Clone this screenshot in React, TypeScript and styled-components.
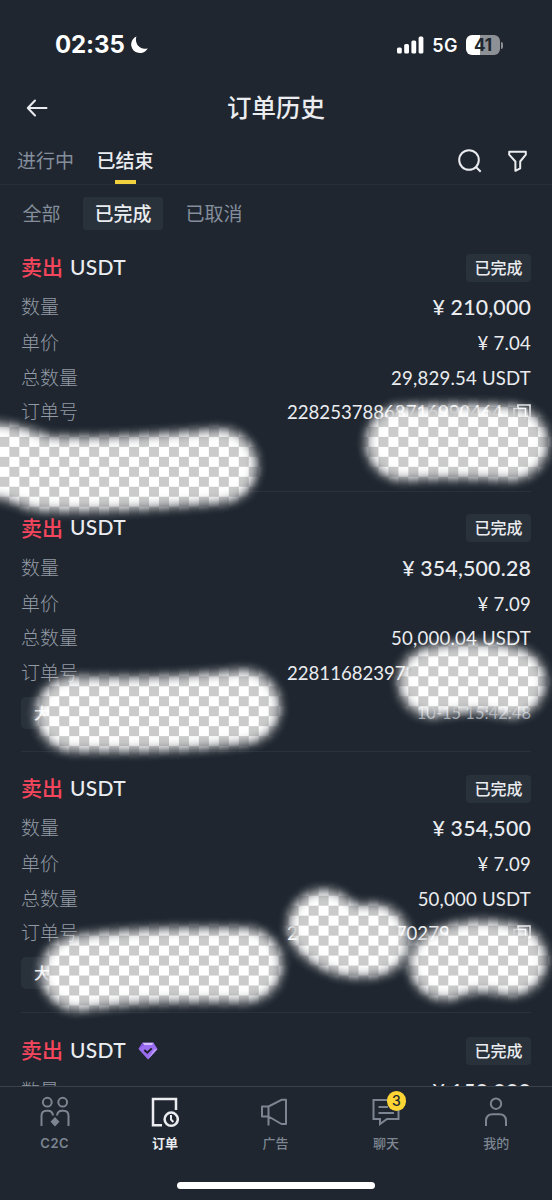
import React from 'react';
import styled, { createGlobalStyle } from 'styled-components';

const Global = createGlobalStyle`
  * { box-sizing: border-box; }
  body { margin: 0; background: #1f262f; }
`;

const latin = `Lato, 'Noto Sans CJK SC', sans-serif`;
const cjk = `'Noto Sans CJK SC', sans-serif`;
const ui = `Inter, 'Noto Sans CJK SC', sans-serif`;

const Screen = styled.div`
  position: relative;
  width: 552px;
  height: 1200px;
  overflow: hidden;
  display: flex;
  flex-direction: column;
  background: #1f262f;
  color: #eaecef;
  font-family: ${cjk};
`;

const StatusBar = styled.div`
  display: flex;
  align-items: center;
  height: 78px;
  padding: 12px 49px 0 55px;
  font-family: ${ui};
  color: #fff;
`;
const Clock = styled.span`
  font-size: 24px;
  font-weight: 700;
  line-height: 28px;
  letter-spacing: -0.1px;
  width: 70px;
  white-space: nowrap;
  margin-right: 5px;
`;
const StatusRight = styled.div`
  margin-left: auto;
  display: flex;
  align-items: center;
`;
const Network = styled.span`
  font-size: 18px;
  font-weight: 600;
  letter-spacing: 0.5px;
  line-height: 24px;
  margin: 1px 8px 0 8px;
`;
const Battery = styled.div`
  width: 34px;
  height: 20px;
  border-radius: 6px;
  background: linear-gradient(90deg, #fff 41%, #8d9196 41%);
  color: #20262e;
  font-size: 17px;
  font-weight: 700;
  line-height: 20px;
  text-align: center;
`;
const BatteryTip = styled.div`
  width: 2px;
  height: 7px;
  margin-left: 1px;
  border-radius: 0 2px 2px 0;
  background: #8d9196;
`;

const TitleBar = styled.header`
  display: grid;
  grid-template-columns: 60px 1fr 60px;
  align-items: center;
  height: 58px;
`;
const Back = styled.div`
  padding-left: 26px;
  padding-top: 1px;
  display: flex;
`;
const Title = styled.h1`
  margin: 0;
  text-align: center;
  font-size: 24.5px;
  font-weight: 500;
  line-height: 36px;
`;

const Tabs = styled.nav`
  display: flex;
  align-items: stretch;
  height: 49px;
  padding: 0 25px 0 17px;
  border-bottom: 1px solid #262e38;
`;
const Tab = styled.div<{ $active?: boolean }>`
  display: flex;
  flex-direction: column;
  align-items: center;
  justify-content: space-between;
  margin-right: 22.5px;
  padding-top: 9px;
  font-size: 19px;
  line-height: 30px;
  font-weight: ${p => (p.$active ? 500 : 400)};
  color: ${p => (p.$active ? '#eaecef' : '#848e9c')};
`;
const TabMark = styled.span`
  width: 21px;
  height: 4px;
  background: #f0d03c;
`;
const Tools = styled.div`
  margin-left: auto;
  display: flex;
  align-items: center;
  gap: 26px;
  padding-top: 2px;
`;

const Filters = styled.div`
  display: flex;
  align-items: center;
  height: 46px;
  padding: 10px 0 0 11px;
`;
const Filter = styled.span<{ $active?: boolean }>`
  height: 33px;
  line-height: 31px;
  padding: 0 11.5px;
  margin-right: 11px;
  border-radius: 3px;
  font-size: 19px;
  font-weight: ${p => (p.$active ? 500 : 400)};
  color: ${p => (p.$active ? '#eaecef' : '#848e9c')};
  background: ${p => (p.$active ? '#29313b' : 'transparent')};
`;

const List = styled.main`
  flex: 1;
  min-height: 0;
  overflow: hidden;
  padding: 0 21px;
`;
const Card = styled.section<{ $last?: boolean }>`
  height: 260.6px;
  padding-top: ${p => (p.$last ? 21 : 19.5)}px;
  border-bottom: 1px solid #29313a;
`;
const CardHead = styled.div`
  display: flex;
  align-items: center;
  height: 34px;
  margin-bottom: 4px;
  font-size: 21px;
  line-height: 30px;
`;
const Side = styled.span`
  color: #f6465d;
  font-weight: 500;
  margin: -3px 7px 0 0;
`;
const Coin = styled.span`
  font-family: ${latin};
  font-weight: 500;
  letter-spacing: 0.3px;
  margin: -2px 12px 0 0;
`;
const Status = styled.span`
  margin-left: auto;
  width: 65px;
  height: 28px;
  border-radius: 4px;
  background: #29313b;
  font-size: 16px;
  font-weight: 500;
  line-height: 26px;
  text-align: center;
`;
const Row = styled.div<{ $first?: boolean }>`
  display: flex;
  align-items: center;
  justify-content: space-between;
  height: ${p => (p.$first ? 37.5 : 34.4)}px;
`;
const Label = styled.span`
  font-size: 19px;
  font-weight: 300;
  line-height: 28px;
  margin-bottom: 2px;
  color: #929aa5;
`;
const Value = styled.span<{ $large?: boolean }>`
  display: flex;
  align-items: center;
  font-family: ${latin};
  font-size: ${p => (p.$large ? 21.3 : 18.6)}px;
  font-weight: ${p => (p.$large ? 500 : 400)};
  letter-spacing: 0.2px;
  white-space: pre;
`;
const OrderNo = styled.span`
  display: flex;
  width: 226px;
  letter-spacing: 0;
`;
const Erased = styled.span`
  width: 98px;
`;
const Foot = styled.div`
  display: flex;
  align-items: center;
  justify-content: space-between;
  height: 46px;
`;
const Party = styled.span`
  height: 32px;
  padding: 0 13px;
  border-radius: 5px;
  background: #29313b;
  font-size: 16px;
  font-weight: 500;
  line-height: 31px;
`;
const Time = styled.span`
  font-family: ${latin};
  font-size: 16.5px;
  color: #929aa5;
`;

const TabBar = styled.footer`
  display: grid;
  grid-template-columns: repeat(5, 1fr);
  height: 114px;
  border-top: 1px solid #39414b;
  background: #1f262f;
`;
const NavItem = styled.div<{ $active?: boolean }>`
  display: flex;
  flex-direction: column;
  align-items: center;
  padding: 9px 1px 0 0;
  font-family: ${ui};
  font-size: 13px;
  font-weight: ${p => (p.$active ? 700 : 500)};
  line-height: 20px;
  color: ${p => (p.$active ? '#eaecef' : '#7c8591')};
`;
const NavLatin = styled.span`
  font-weight: 600;
  letter-spacing: 0.5px;
`;
const IconBox = styled.div`
  position: relative;
  height: 37px;
`;
const Badge = styled.span`
  position: absolute;
  left: 15px;
  top: -5px;
  width: 19px;
  height: 20px;
  border-radius: 10px;
  background: #fcd535;
  color: #20262e;
  font-size: 14px;
  line-height: 20px;
  text-align: center;
`;
const HomeBar = styled.div`
  position: absolute;
  left: 177px;
  bottom: 11px;
  width: 198px;
  height: 7px;
  border-radius: 4px;
  background: #fff;
`;
const Overlay = styled.svg`
  position: absolute;
  left: 0;
  top: 0;
  pointer-events: none;
`;

const line = { fill: 'none', stroke: 'currentColor', strokeWidth: 2 } as const;

const Moon = () => (
  <svg width="18" height="18" viewBox="0 0 18 18">
    <path d="M6.4 0.4A8.7 8.7 0 1 0 17.7 12.2C10.5 14.8 4 8 6.4 0.4Z" fill="#fff" />
  </svg>
);
const Signal = () => (
  <svg width="27" height="18" viewBox="0 0 27 18" fill="#fff">
    <rect x="0" y="11.5" width="4.8" height="6" rx="1.5" />
    <rect x="7.2" y="8" width="4.8" height="9.5" rx="1.5" />
    <rect x="14.4" y="4.5" width="4.8" height="13" rx="1.5" />
    <rect x="21.6" y="0.5" width="4.8" height="17" rx="1.5" />
  </svg>
);
const BackIcon = () => (
  <svg width="22" height="18" viewBox="0 0 22 18" {...line}>
    <path d="M9 1.5L1.8 9L9 16.5M2 9H20.5" strokeLinecap="round" strokeLinejoin="round" />
  </svg>
);
const SearchIcon = () => (
  <svg width="24" height="24" viewBox="0 0 24 24" {...line}>
    <circle cx="11" cy="11" r="9.8" />
    <path d="M18 18L22.7 22.7" />
  </svg>
);
const FunnelIcon = () => (
  <svg width="19" height="22" viewBox="0 0 19 22" {...line}>
    <path d="M1.2 1.7H17.8V4.7L12.2 11.5V18.3L7.4 20.8V11.5L1.2 4.7Z" strokeLinejoin="round" />
  </svg>
);
const CopyIcon = () => (
  <svg width="18" height="16" viewBox="0 0 18 16" fill="none" stroke="currentColor" strokeWidth="1.6">
    <path d="M5 4V1H17V12.5H14M1 4.5H12.5V15H1Z" />
  </svg>
);
const Gem = () => (
  <svg width="20" height="18" viewBox="0 0 20 18">
    <path d="M4.5 0.8H15.5L19.5 7L10 17.5L0.5 7Z" fill="#9a6cf0" />
    <path d="M4.5 0.8H15.5L13.8 3H6.2Z" fill="#d2bdff" />
    <path d="M0.5 7L6.2 3L4.5 0.8Z" fill="#8658e0" />
    <path d="M19.5 7L10 17.5L16 7.5Z" fill="#c09cff" />
    <path d="M6.3 8L9.3 10.7L13.7 6.4" fill="none" stroke="#20202c" strokeWidth="2" />
  </svg>
);
const PeopleIcon = () => (
  <svg width="30" height="32" viewBox="0 0 30 32" {...line}>
    <circle cx="7.3" cy="6.2" r="4.4" />
    <circle cx="22.7" cy="6.2" r="4.4" />
    <path d="M1.5 30V20Q1.5 14.8 6.5 14.8H8Q12.5 14.8 13 19.5M28.5 30V20Q28.5 14.8 23.5 14.8H22Q17.5 14.8 17 19.5" />
    <path d="M15 21L19.5 25.7L15 30.4L10.5 25.7Z" fill="currentColor" stroke="none" />
  </svg>
);
const OrderIcon = () => (
  <svg width="28" height="32" viewBox="0 0 28 32" {...line} strokeWidth="2.5">
    <path d="M11 29.2H2V3H25V14" />
    <circle cx="20.2" cy="23.2" r="6.6" />
    <path d="M20 19V23.5L22.4 26" strokeWidth="2" />
  </svg>
);
const HornIcon = () => (
  <svg width="28" height="32" viewBox="0 0 28 32" {...line}>
    <path d="M1 10.5H7.5V20.5H1ZM7.5 10.5L20.5 3.8H25V28H20.5L7.5 20.5M7.5 20V29.5" strokeLinejoin="round" />
  </svg>
);
const ChatIcon = () => (
  <svg width="28" height="32" viewBox="0 0 28 32" {...line}>
    <path d="M17 4H1.5V23H8V28L15 23H26.5V14M6.5 11H16M6.5 17H22" />
  </svg>
);
const UserIcon = () => (
  <svg width="24" height="32" viewBox="0 0 24 32" {...line}>
    <circle cx="12" cy="7.7" r="5.2" />
    <path d="M2 30V25Q2 18.3 8.7 18.3H15.3Q22 18.3 22 25V30" />
  </svg>
);

interface Order {
  amount: string;
  price?: string;
  total?: string;
  id?: [string, string?];
  party?: string;
  time?: string;
  gem?: boolean;
}

const orders: Order[] = [
  { amount: '210,000', price: '7.04', total: '29,829.54 USDT', id: ['22825378868716990464'] },
  { amount: '354,500.28', price: '7.09', total: '50,000.04 USDT', id: ['228116823973'], party: '大', time: '10-15 15:42:48' },
  { amount: '354,500', price: '7.09', total: '50,000 USDT', id: ['2', '70279'], party: '大' },
  { amount: '150,000', gem: true },
];

const OrderCard = ({ order }: { order: Order }) => (
  <Card $last={order.gem}>
    <CardHead>
      <Side>卖出</Side>
      <Coin>USDT</Coin>
      {order.gem && <Gem />}
      <Status>已完成</Status>
    </CardHead>
    <Row $first>
      <Label>数量</Label>
      <Value $large>¥ {order.amount}</Value>
    </Row>
    {order.price && (
      <Row>
        <Label>单价</Label>
        <Value>¥ {order.price}</Value>
      </Row>
    )}
    {order.total && (
      <Row>
        <Label>总数量</Label>
        <Value>{order.total}</Value>
      </Row>
    )}
    {order.id && (
      <Row>
        <Label>订单号</Label>
        <Value>
          <OrderNo>
            {order.id[0]}
            {order.id[1] && <Erased />}
            {order.id[1]}
          </OrderNo>
          <CopyIcon />
        </Value>
      </Row>
    )}
    <Foot>
      {order.party && <Party>{order.party}</Party>}
      {order.time && <Time>{order.time}</Time>}
    </Foot>
  </Card>
);

const Smudges = () => (
  <Overlay width="552" height="1200" viewBox="0 0 552 1200">
    <defs>
      <pattern id="checks" x="-0.6" y="17.95" width="19.95" height="19.95" patternUnits="userSpaceOnUse">
        <rect width="20" height="20" fill="#fff" />
        <path d="M0 0H9.975V9.975H0ZM9.975 9.975H19.95V19.95H9.975Z" fill="#cbcbcb" />
      </pattern>
      <filter id="soft" filterUnits="userSpaceOnUse" x="-60" y="350" width="680" height="720">
        <feGaussianBlur stdDeviation="5.5" />
      </filter>
      <mask id="brush" maskUnits="userSpaceOnUse" x="0" y="350" width="552" height="700">
        <g filter="url(#soft)" fill="none" stroke="#fff" strokeLinecap="round" strokeLinejoin="round">
          <path d="M-10 460Q10 460 40 473Q100 477 220 466" strokeWidth="72" />
          <path d="M403 443Q455 440 511 443" strokeWidth="72" />
          <path d="M73 714Q170 716 243 707" strokeWidth="72" />
          <path d="M433 682Q475 673 511 682" strokeWidth="67" />
          <path d="M78 973Q140 963 245 965" strokeWidth="72" />
          <path d="M324 926Q344 945 373 940" strokeWidth="70" />
          <path d="M445 964Q475 951 511 960" strokeWidth="69" />
        </g>
      </mask>
    </defs>
    <rect width="552" height="1200" fill="#fff" opacity="0.35" mask="url(#brush)" />
    <rect width="552" height="1200" fill="url(#checks)" mask="url(#brush)" />
  </Overlay>
);

export default function App() {
  return (
    <Screen>
      <Global />
      <StatusBar>
        <Clock>02:35</Clock>
        <Moon />
        <StatusRight>
          <Signal />
          <Network>5G</Network>
          <Battery>41</Battery>
          <BatteryTip />
        </StatusRight>
      </StatusBar>
      <TitleBar>
        <Back><BackIcon /></Back>
        <Title>订单历史</Title>
      </TitleBar>
      <Tabs>
        <Tab>进行中</Tab>
        <Tab $active>已结束<TabMark /></Tab>
        <Tools>
          <SearchIcon />
          <FunnelIcon />
        </Tools>
      </Tabs>
      <Filters>
        <Filter>全部</Filter>
        <Filter $active>已完成</Filter>
        <Filter>已取消</Filter>
      </Filters>
      <List>
        {orders.map((order, i) => <OrderCard key={i} order={order} />)}
      </List>
      <TabBar>
        <NavItem><IconBox><PeopleIcon /></IconBox><NavLatin>C2C</NavLatin></NavItem>
        <NavItem $active><IconBox><OrderIcon /></IconBox>订单</NavItem>
        <NavItem><IconBox><HornIcon /></IconBox>广告</NavItem>
        <NavItem><IconBox><ChatIcon /><Badge>3</Badge></IconBox>聊天</NavItem>
        <NavItem><IconBox><UserIcon /></IconBox>我的</NavItem>
      </TabBar>
      <HomeBar />
      <Smudges />
    </Screen>
  );
}
